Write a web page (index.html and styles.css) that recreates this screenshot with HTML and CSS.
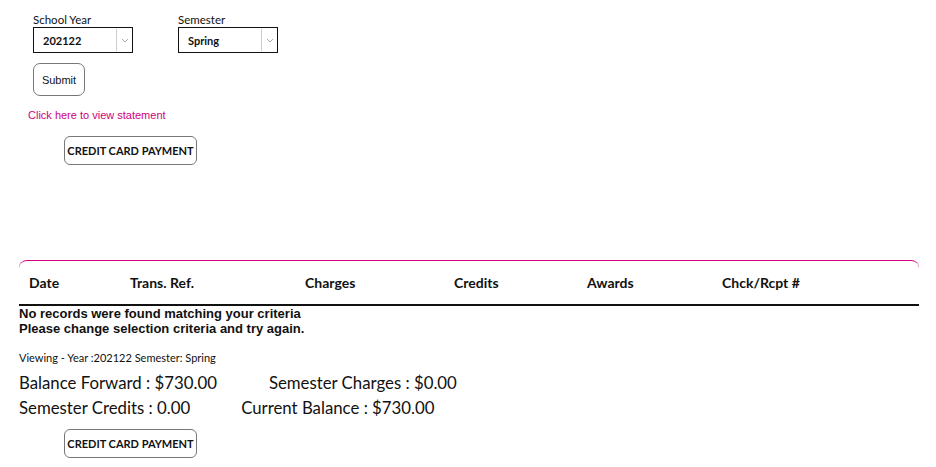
FILE: index.html
```html
<!DOCTYPE html>
<html>
<head>
<meta charset="utf-8">
<link rel="stylesheet" href="styles.css">
</head>
<body>
<div class="page">
  <div class="filters">
    <div class="field">
      <label class="lbl">School Year</label>
      <div class="select"><span class="val">202122</span><span class="arrow"><svg width="8" height="5" viewBox="0 0 8 5"><path d="M1 1l3 3 3-3" fill="none" stroke="#aaa" stroke-width="1"/></svg></span></div>
    </div>
    <div class="field sem">
      <label class="lbl">Semester</label>
      <div class="select"><span class="val">Spring</span><span class="arrow"><svg width="8" height="5" viewBox="0 0 8 5"><path d="M1 1l3 3 3-3" fill="none" stroke="#aaa" stroke-width="1"/></svg></span></div>
    </div>
  </div>
  <button class="submit">Submit</button>
  <a class="stmt">Click here to view statement</a>
  <button class="ccp top">CREDIT CARD PAYMENT</button>

  <div class="table">
    <div class="th c1">Date</div>
    <div class="th c2">Trans. Ref.</div>
    <div class="th c3">Charges</div>
    <div class="th c4">Credits</div>
    <div class="th c5">Awards</div>
    <div class="th c6">Chck/Rcpt #</div>
  </div>
  <div class="norec">No records were found matching your criteria<br>Please change selection criteria and try again.</div>
  <div class="viewing">Viewing - Year :202122 Semester: Spring</div>
  <div class="summary">
    <div class="sumrow"><span class="s1">Balance Forward : $730.00</span><span class="s2">Semester Charges : $0.00</span></div>
    <div class="sumrow"><span class="s1">Semester Credits : 0.00</span><span class="s3">Current Balance : $730.00</span></div>
  </div>
  <button class="ccp bottom">CREDIT CARD PAYMENT</button>
</div>
</body>
</html>
```
FILE: styles.css
```css
* { box-sizing: border-box; }
body { margin: 0; background: #fff; color: #111; font-family: Lato, "Open Sans", sans-serif; }
.page { padding: 13px 18px 0 19px; display: flex; flex-direction: column; align-items: flex-start; }
.filters { display: flex; gap: 45px; padding-left: 14px; }
.field { display: flex; flex-direction: column; }
.lbl { font-size: 11.5px; line-height: 14px; color: #111; }
.select { width: 100px; height: 26px; border: 1px solid #111; display: flex; align-items: center; justify-content: space-between; }
.val { font-size: 11px; font-weight: 700; padding-left: 9px; }
.arrow { width: 16px; height: 22px; border-left: 1px solid #ccc; display: flex; align-items: center; justify-content: center; }
.submit { margin: 10px 0 0 14px; width: 52px; height: 33px; background: #fff; border: 1px solid #777; border-radius: 7px; font-family: "Liberation Sans", Arial, sans-serif; font-size: 11px; color: #111; padding: 0; }
.stmt { margin: 13px 0 0 9px; color: #d1007c; font-family: "Liberation Sans", Arial, sans-serif; font-size: 11px; line-height: 13px; }
.ccp { background: #fff; border: 1px solid #777; border-radius: 6px; height: 29px; width: 133px; font-family: Lato, sans-serif; font-size: 11px; font-weight: 700; color: #111; padding: 0; }
.ccp.top { margin: 14px 0 0 45px; }
.table { margin-top: 95px; width: 900px; height: 46px; border-top: 1px solid #d6007f; border-bottom: 2px solid #111; border-radius: 8px 8px 0 0; display: flex; align-items: center; }
.th { font-size: 14px; font-weight: 700; }
.c1 { width: 111px; padding-left: 10px; }
.c2 { width: 175px; }
.c3 { width: 149px; }
.c4 { width: 133px; }
.c5 { width: 135px; }
.norec { margin-top: 0; font-family: "Liberation Sans", Arial, sans-serif; font-weight: 700; font-size: 13px; line-height: 15px; }
.viewing { margin-top: 15px; font-size: 11px; line-height: 13px; }
.summary { margin-top: 6px; display: flex; flex-direction: column; }
.sumrow { font-size: 16.8px; line-height: 25px; display: flex; }
.s2 { margin-left: 52px; }
.s3 { margin-left: 51px; }
.ccp.bottom { margin: 9px 0 0 45px; }
```
